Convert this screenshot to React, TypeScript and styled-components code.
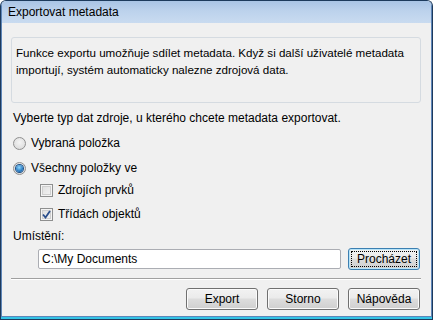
import React from "react";
import styled, { createGlobalStyle } from "styled-components";

const Global = createGlobalStyle`
  html, body { margin: 0; padding: 0; background: #ffffff; }
  body { font-family: "Liberation Sans", Arial, sans-serif; font-size: 12px; color: #000; }
  * { box-sizing: border-box; }
`;

const Window = styled.div`
  width: 433px;
  height: 320px;
  display: flex;
  flex-direction: column;
  background: #f0f0f0;
  border-radius: 6px 6px 0 0;
  border: 1px solid #1d3a5c;
  border-bottom: none;
  overflow: hidden;
`;

const TitleBar = styled.div`
  height: 22px;
  flex: none;
  display: flex;
  align-items: center;
  padding-left: 6px;
  background: linear-gradient(#a9c4e5, #bcd2ec 45%, #c9dbf0);
  border-left: 1px solid #5e86b8;
  border-right: 1px solid #5e86b8;
  font-size: 12px;
  color: #000;
`;

const Body = styled.div`
  flex: 1;
  display: flex;
  flex-direction: column;
  padding: 14px 10px 0 9px;
  background: #f0f0f0;
  border-left: 1px solid #5e86b8;
  border-right: 1px solid #5e86b8;
`;

const InfoBox = styled.div`
  height: 66px;
  border: 1px solid #d5dbe1;
  border-radius: 3px;
  padding: 6px 4px;
  font-size: 11.6px;
  line-height: 17px;
  white-space: nowrap;
  overflow: hidden;
  background: #f0f0f0;
`;

const Prompt = styled.div`
  margin-top: 7px;
  padding-left: 2px;
  line-height: 16px;
`;

const OptionRow = styled.label<{ $indent?: number; $gap: number }>`
  display: flex;
  align-items: center;
  gap: 5px;
  margin-top: ${(p) => p.$gap}px;
  padding-left: ${(p) => p.$indent ?? 0}px;
  line-height: 16px;
`;

const Radio = styled.span<{ $on?: boolean }>`
  width: 13px;
  height: 13px;
  border-radius: 50%;
  border: 1px solid #8f8f8f;
  background: radial-gradient(circle at 50% 40%, #f4f4f4, #d6d6d6);
  display: flex;
  align-items: center;
  justify-content: center;
  flex: none;
  &::after {
    content: "";
    display: ${(p) => (p.$on ? "block" : "none")};
    width: 7px;
    height: 7px;
    border-radius: 50%;
    background: radial-gradient(circle at 45% 35%, #8fd7ff, #1d6fb8 70%, #0b4c8c);
    box-shadow: 0 0 0 1px #1b4f86;
  }
`;

const Check = styled.span`
  width: 13px;
  height: 13px;
  border: 1px solid #8e8f8f;
  background: linear-gradient(135deg, #dcdcdc, #f6f6f6);
  box-shadow: inset 0 0 0 1px #f4f4f4, inset 0 0 0 2px #cfcfcf;
  display: flex;
  align-items: center;
  justify-content: center;
  flex: none;
`;

const FieldLabel = styled.div`
  margin-top: 6px;
  padding-left: 2px;
  line-height: 16px;
`;

const PathRow = styled.div`
  margin-top: 4px;
  display: flex;
  align-items: center;
  padding-left: 27px;
  gap: 7px;
`;

const TextInput = styled.div`
  width: 303px;
  height: 20px;
  border: 1px solid #abadb3;
  border-radius: 2px;
  background: #fff;
  padding-left: 3px;
  display: flex;
  align-items: center;
`;

const Separator = styled.div`
  margin-top: 8px;
  height: 2px;
  border-top: 1px solid #a0a0a0;
  border-bottom: 1px solid #ffffff;
`;

const ButtonRow = styled.div`
  margin-top: 8px;
  display: flex;
  justify-content: flex-end;
  gap: 9px;
  padding-right: 1px;
`;

const Button = styled.button<{ $default?: boolean }>`
  width: 72px;
  height: 22px;
  font-family: "Liberation Sans", Arial, sans-serif;
  font-size: 12px;
  color: #000;
  border: 1px solid ${(p) => (p.$default ? "#3c7fb1" : "#707070")};
  border-radius: 3px;
  background: linear-gradient(#f2f2f2 0%, #ebebeb 45%, #dddddd 50%, #cfcfcf 100%);
  box-shadow: inset 0 0 0 1px ${(p) => (p.$default ? "#b7e4f9" : "#fbfbfb")};
  padding: 0;
  position: relative;
  display: flex;
  align-items: center;
  justify-content: center;
`;

const Focus = styled.span`
  position: absolute;
  inset: 2px;
  border: 1px dotted #000;
`;

const BottomEdge = styled.div`
  height: 4px;
  flex: none;
  background: linear-gradient(#5e86b8 0, #5e86b8 1px, #33c3e6 1px, #33c3e6 3px, #1d3a5c 3px);
`;

export default function App() {
  return (
    <>
      <Global />
      <Window>
        <TitleBar>Exportovat metadata</TitleBar>
        <Body>
          <InfoBox>
            Funkce exportu umožňuje sdílet metadata. Když si další uživatelé metadata
            <br />
            importují, systém automaticky nalezne zdrojová data.
          </InfoBox>
          <Prompt>Vyberte typ dat zdroje, u kterého chcete metadata exportovat.</Prompt>
          <OptionRow $gap={9} $indent={2}>
            <Radio />
            Vybraná položka
          </OptionRow>
          <OptionRow $gap={9} $indent={2}>
            <Radio $on />
            Všechny položky ve
          </OptionRow>
          <OptionRow $gap={6} $indent={29}>
            <Check />
            Zdrojích prvků
          </OptionRow>
          <OptionRow $gap={8} $indent={29}>
            <Check>
              <svg width="9" height="9" viewBox="0 0 9 9">
                <path d="M1 4.5 L3.5 7.5 L8 1" fill="none" stroke="#2b4f8c" strokeWidth="1.8" />
              </svg>
            </Check>
            Třídách objektů
          </OptionRow>
          <FieldLabel>Umístění:</FieldLabel>
          <PathRow>
            <TextInput>C:\My Documents</TextInput>
            <Button $default>
              <Focus />
              Procházet
            </Button>
          </PathRow>
          <Separator />
          <ButtonRow>
            <Button>Export</Button>
            <Button>Storno</Button>
            <Button>Nápověda</Button>
          </ButtonRow>
        </Body>
        <BottomEdge />
      </Window>
    </>
  );
}
